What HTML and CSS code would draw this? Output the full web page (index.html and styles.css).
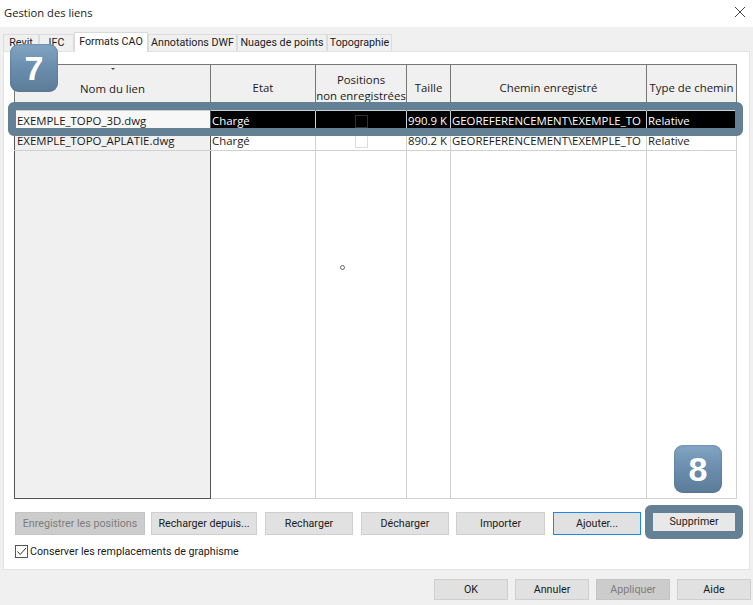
FILE: index.html
```html
<!DOCTYPE html>
<html lang="fr">
<head>
  <meta charset="UTF-8"/>
  <title>Gestion des liens</title>
  <link rel="stylesheet" href="styles.css">
</head>
<body>
  <header class="titlebar">
    <span>Gestion des liens</span>
    <svg class="close" width="12" height="12" viewBox="0 0 12 12"><path d="M1 1L11 11M11 1L1 11" stroke="#444" stroke-width="1" fill="none"/></svg>
  </header>

  <nav class="tabs">
    <a class="tab tab-revit">Revit</a>
    <a class="tab tab-ifc">IFC</a>
    <a class="tab tab-cao active">Formats CAO</a>
    <a class="tab tab-dwf">Annotations DWF</a>
    <a class="tab tab-nuages">Nuages de points</a>
    <a class="tab tab-topo">Topographie</a>
  </nav>

  <section class="panel">
    <table class="links">
      <colgroup>
        <col class="c-name"><col class="c-etat"><col class="c-pos"><col class="c-size"><col class="c-path"><col class="c-type">
      </colgroup>
      <thead>
        <tr>
          <th class="sorted">Nom du lien</th>
          <th>Etat</th>
          <th>Positions<br>non enregistrées</th>
          <th>Taille</th>
          <th>Chemin enregistré</th>
          <th>Type de chemin</th>
        </tr>
      </thead>
      <tbody>
        <tr class="selected">
          <td class="name">EXEMPLE_TOPO_3D.dwg</td>
          <td>Chargé</td>
          <td class="check"><span class="box"></span></td>
          <td>990.9 K</td>
          <td>GEOREFERENCEMENT\EXEMPLE_TO</td>
          <td>Relative</td>
        </tr>
        <tr>
          <td class="name">EXEMPLE_TOPO_APLATIE.dwg</td>
          <td>Chargé</td>
          <td class="check"><span class="box"></span></td>
          <td>890.2 K</td>
          <td>GEOREFERENCEMENT\EXEMPLE_TO</td>
          <td>Relative</td>
        </tr>
        <tr class="filler">
          <td class="name"></td><td></td><td></td><td></td><td></td><td></td>
        </tr>
      </tbody>
    </table>

    <div class="actions">
      <button class="btn disabled w-save">Enregistrer les positions</button>
      <button class="btn w-from">Recharger depuis...</button>
      <button class="btn w-std">Recharger</button>
      <button class="btn w-std">Décharger</button>
      <button class="btn w-imp">Importer</button>
      <button class="btn focus w-std">Ajouter...</button>
      <button class="btn plain w-del">Supprimer</button>
    </div>

    <label class="keep">
      <span class="tick">
        <svg width="11" height="11" viewBox="0 0 11 11"><path d="M1.5 5.5L4.2 8.5L10 2" stroke="#333" stroke-width="1" fill="none"/></svg>
      </span>
      Conserver les remplacements de graphisme
    </label>
  </section>

  <footer class="bottom">
    <button class="btn w-foot">OK</button>
    <button class="btn w-foot">Annuler</button>
    <button class="btn disabled w-foot">Appliquer</button>
    <button class="btn w-foot">Aide</button>
  </footer>

  <!-- annotations over the dialog -->
  <div class="callout callout-row"></div>
  <div class="callout callout-del"></div>
  <div class="badge badge-7">7</div>
  <div class="badge badge-8">8</div>
  <div class="cursor"></div>
</body>
</html>
```

FILE: styles.css
```css
* { box-sizing:border-box; }
html,body { height:100%; }
body { margin:0; width:753px; height:605px; overflow:hidden; position:relative; background:#f0f0f0; color:#1a1a1a; font-family:'Roboto','Noto Sans',sans-serif; font-size:10.7px; }

.titlebar { height:27px; background:#fff; display:flex; align-items:center; justify-content:space-between; padding:0 7px 3px 4px; font-family:'Open Sans',sans-serif; font-size:11.2px; }

.tabs { display:flex; height:24px; padding:6px 0 0 3px; align-items:flex-end; }
.tab { height:17px; line-height:16px; text-align:center; background:#f0f0f0; border:1px solid #dcdcdc; border-bottom:none; white-space:nowrap; }
.tab.active { height:20px; line-height:17px; background:#fff; border-color:#d9d9d9; position:relative; top:1px; z-index:1; }
.tab-revit { width:36px; }
.tab-ifc { width:35px; }
.tab-cao { width:74px; }
.tab-dwf { width:89px; }
.tab-nuages { width:90px; }
.tab-topo { width:65px; }

.panel { margin:0 3px; width:747px; height:519px; background:#fff; border:1px solid #e3e3e3; padding:12px 11px 0 10px; }

.links { width:722px; height:435px; table-layout:fixed; border-collapse:collapse; border:1px solid #d0d0d0; font-family:'Open Sans',sans-serif; }
.c-name { width:196px; }
.c-etat { width:105px; }
.c-pos { width:91px; }
.c-size { width:44px; }
.c-path { width:196px; }
.c-type { width:90px; }
.links th { height:46px; padding:0; background:#f0f0f0; font-weight:400; font-size:11.4px; line-height:16px; border:1px solid #777; border-bottom:none; white-space:nowrap; }
.links th.sorted { position:relative; padding-top:2px; }
.links th.sorted::before { content:""; position:absolute; left:96px; top:3px; border:2px solid transparent; border-top:2px solid #444; border-bottom:none; }
.links td { height:20px; padding:0 1px; border:1px solid #d0d0d0; white-space:nowrap; overflow:hidden; font-size:11.4px; }
.links td.name { background:#f0f0f0; border-left:1px solid #555; border-right:1px solid #555; padding-left:2px; }
.links .selected td { background:#000; color:#fff; }
.links .selected td.name { background:#f7f7f7; color:#1a1a1a; }
.links .filler td { height:auto; }
.links .filler td.name { border-bottom:1px solid #555; }
.check { text-align:center; }
.box { display:inline-block; width:13px; height:13px; border:1px solid #dcdcdc; vertical-align:middle; }
.selected .box { border-color:#333; }

.actions { display:flex; margin-top:13px; gap:8px; padding-left:1px; }
.btn { height:23px; padding:0; background:#e1e1e1; border:1px solid #cfcfcf; color:#1a1a1a; font-family:inherit; font-size:10.7px; white-space:nowrap; }
.btn.disabled { background:#cccccc; border-color:#c4c4c4; color:#7c7c7c; }
.btn.focus { border:1px solid #1e88e5; }
.w-save { width:130px; margin-right:-2px; }
.w-from { width:106px; }
.w-std { width:88px; }
.w-imp { width:89px; margin-left:-1px; }
.w-del { width:82px; margin-left:4px; height:19px; background:#e8e8e8; border:none; }
.w-foot { width:74px; height:21px; }

.keep { display:flex; align-items:center; gap:2px; margin-top:10px; padding-left:1px; }
.tick { width:13px; height:13px; border:1px solid #555; display:flex; align-items:center; justify-content:center; }

.bottom { display:flex; justify-content:flex-end; gap:7px; margin-top:9px; padding-right:2px; }

.callout { position:absolute; border:8px solid #648095; border-radius:6px; }
.callout-row { left:8px; top:102px; width:735px; height:34px; }
.callout-del { left:645px; top:505px; width:98px; height:34px; }

.badge { position:absolute; width:48px; height:48px; border-radius:9px; background:linear-gradient(#82a5c4,#6a8dad 50%,#5c7c98); box-shadow:inset 0 0 2px #4f6c86; color:#fff; font-family:'Liberation Sans',sans-serif; font-weight:700; font-size:34px; line-height:48px; text-align:center; }
.badge-7 { left:10px; top:44px; }
.badge-8 { left:674px; top:445px; }

.cursor { position:absolute; left:340px; top:265px; width:5px; height:5px; border:1px solid #666; border-radius:50%; background:#fff; }
```
